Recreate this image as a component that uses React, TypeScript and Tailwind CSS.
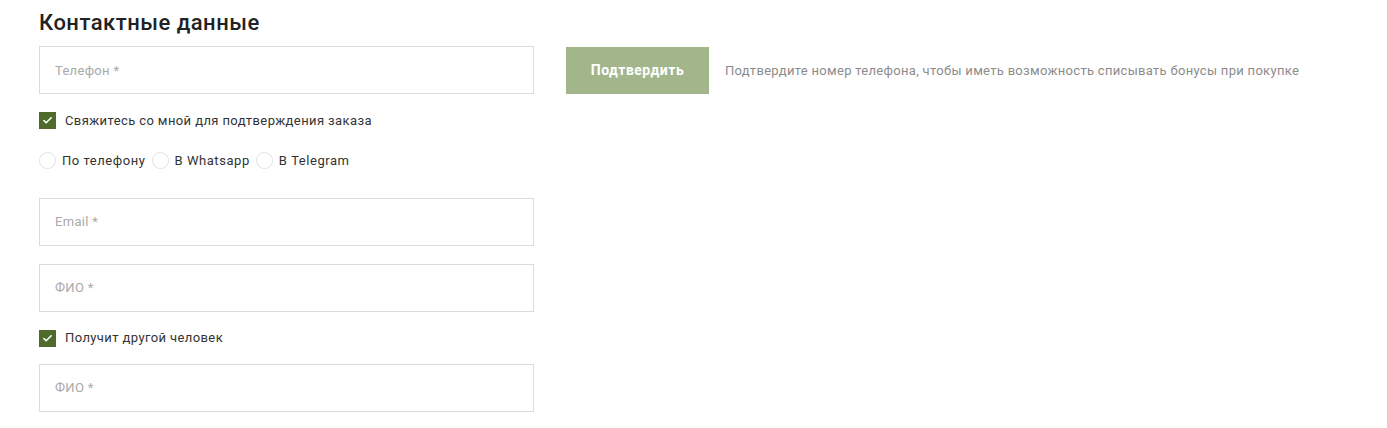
import { Check } from "lucide-react"

const font = { fontFamily: "Roboto, 'Liberation Sans', sans-serif" }

function Field({ placeholder }: { placeholder: string }) {
    return (
        <input
            placeholder={placeholder}
            className="block w-[495px] h-[48px] border border-[#dcdcdc] bg-white px-[15px] text-[13px] tracking-[0.3px] text-[#333] placeholder:text-[#a9a9a9] outline-none"
        />
    )
}

function CheckRow({ label }: { label: string }) {
    return (
        <label className="flex items-center gap-[9px] h-[17px]">
            <span className="flex items-center justify-center w-[17px] h-[17px] bg-[#4e6b2b]">
                <Check className="w-[11px] h-[11px] text-white" strokeWidth={3.5} />
            </span>
            <span className="text-[13px] tracking-[0.4px] text-[#333]">{label}</span>
        </label>
    )
}

function Radio({ label }: { label: string }) {
    return (
        <label className="flex items-center gap-[6px]">
            <span className="w-[17px] h-[17px] rounded-full border border-[#e3e3e3] bg-white" />
            <span className="text-[13px] tracking-[0.55px] text-[#333]">{label}</span>
        </label>
    )
}

export default function App() {
    return (
        <div className="w-[1387px] h-[428px] bg-white pl-[39px] pt-[9px]" style={font}>
            <h2 className="text-[22px] leading-[28px] font-medium tracking-[0.5px] text-[#222]">Контактные данные</h2>

            <div className="flex items-start mt-[9px]">
                <Field placeholder="Телефон *" />
                <button className="ml-[32px] mt-[1px] w-[143px] h-[47px] bg-[#a3b68b] text-white text-[14px] tracking-[0.5px] font-bold">
                    Подтвердить
                </button>
                <p className="ml-[16px] mt-[15px] text-[13px] tracking-[0.3px] text-[#8c8c8c]">
                    Подтвердите номер телефона, чтобы иметь возможность списывать бонусы при покупке
                </p>
            </div>

            <div className="mt-[18px]">
                <CheckRow label="Свяжитесь со мной для подтверждения заказа" />
            </div>

            <div className="flex items-center gap-[6px] mt-[22px]">
                <Radio label="По телефону" />
                <Radio label="В Whatsapp" />
                <Radio label="В Telegram" />
            </div>

            <div className="mt-[27px] flex flex-col gap-[18px]">
                <Field placeholder="Email *" />
                <Field placeholder="ФИО *" />
            </div>

            <div className="mt-[18px]">
                <CheckRow label="Получит другой человек" />
            </div>

            <div className="mt-[17px]">
                <Field placeholder="ФИО *" />
            </div>
        </div>
    )
}
